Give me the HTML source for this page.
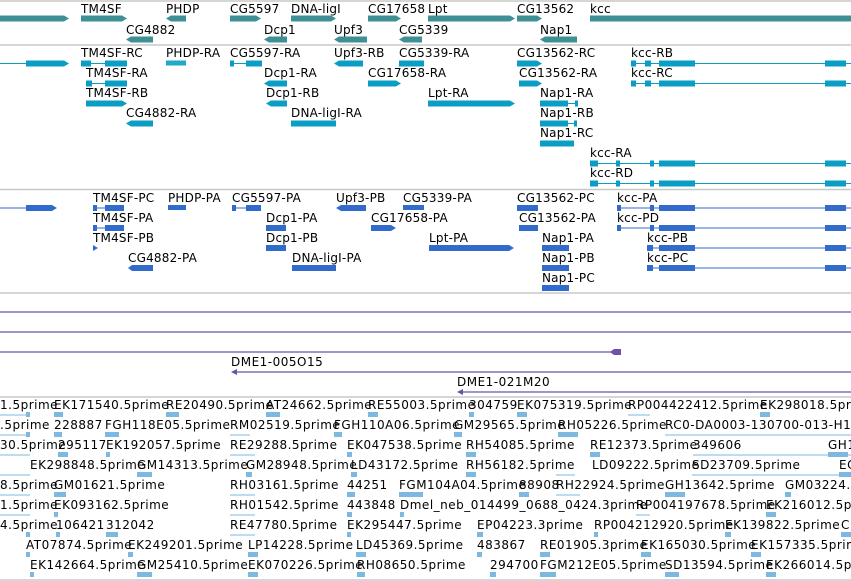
<!DOCTYPE html>
<html><head><meta charset="utf-8"><style>
html,body{margin:0;padding:0;background:#fff;width:851px;height:581px;overflow:hidden}
svg{display:block}
text{font-family:"DejaVu Sans","Liberation Sans",sans-serif;font-size:12px;fill:#000;letter-spacing:0.2px}
.p text{letter-spacing:0.5px}
</style></head><body>
<svg width="851" height="581" viewBox="0 0 851 581" xmlns="http://www.w3.org/2000/svg">
<g stroke="#c8c8c8" stroke-width="1.5">
<line x1="0" y1="1" x2="851" y2="1"/><line x1="0" y1="45" x2="851" y2="45"/>
<line x1="0" y1="189.5" x2="851" y2="189.5"/><line x1="0" y1="293" x2="851" y2="293"/>
<line x1="0" y1="397" x2="851" y2="397"/><line x1="0" y1="580" x2="851" y2="580"/>
</g>
<!-- Track 1 -->
<g fill="#3f9094">
<path d="M0 15.5H64L69 18.5L64 21.5H0Z"/>
<path d="M81 15.5H122L127 18.5L122 21.5H81Z"/>
<path d="M171 15.5H186V21.5H171L166 18.5Z"/>
<path d="M230 15.5H256L261 18.5L256 21.5H230Z"/>
<path d="M291 15.5H331L336 18.5L331 21.5H291Z"/>
<path d="M368 15.5H396L401 18.5L396 21.5H368Z"/>
<path d="M428 15.5H510L515 18.5L510 21.5H428Z"/>
<path d="M517 15.5H537L542 18.5L537 21.5H517Z"/>
<rect x="590" y="15.5" width="261" height="6"/>
<path d="M131 36.5H153V42.5H131L126 39.5Z"/>
<path d="M269 36.5H287V42.5H269L264 39.5Z"/>
<path d="M339 36.5H367V42.5H339L334 39.5Z"/>
<path d="M404 36.5H422V42.5H404L399 39.5Z"/>
<path d="M545 36.5H577V42.5H545L540 39.5Z"/>
</g>
<g>
<text x="81" y="13">TM4SF</text><text x="166" y="13">PHDP</text><text x="230" y="13">CG5597</text>
<text x="291" y="13">DNA-ligI</text><text x="368" y="13">CG17658</text><text x="428" y="13">Lpt</text>
<text x="517" y="13">CG13562</text><text x="590" y="13">kcc</text>
<text x="126" y="34">CG4882</text><text x="264" y="34">Dcp1</text><text x="334" y="34">Upf3</text>
<text x="399" y="34">CG5339</text><text x="540" y="34">Nap1</text>
</g>
<!-- Track 2 cyan -->
<g fill="#0a9ec4" stroke="#0a9ec4">
<g stroke-width="1" fill="none">
<line x1="0" y1="63.5" x2="26" y2="63.5"/>
<line x1="81" y1="63.5" x2="127" y2="63.5"/><line x1="86" y1="83.5" x2="127" y2="83.5"/>
<line x1="230" y1="63.5" x2="262" y2="63.5"/>
<line x1="631" y1="63.5" x2="851" y2="63.5"/><line x1="631" y1="83.5" x2="851" y2="83.5"/>
<line x1="590" y1="163.5" x2="851" y2="163.5"/><line x1="590" y1="183.5" x2="851" y2="183.5"/>
<line x1="540" y1="103.5" x2="578" y2="103.5"/><line x1="540" y1="123.5" x2="577" y2="123.5"/>
</g>
<g stroke="none">
<path d="M26 60.5H64L69 63.5L64 66.5H26Z"/>
<rect x="81" y="60.5" width="10" height="6"/><rect x="105" y="60.5" width="22" height="6"/>
<rect x="86" y="80.5" width="6" height="6"/><rect x="105" y="80.5" width="22" height="6"/>
<path d="M86 100.5H122L127 103.5L122 106.5H86Z"/>
<rect x="166" y="60.5" width="20" height="5" opacity=".9"/>
<rect x="230" y="60.5" width="4" height="6"/><rect x="246" y="60.5" width="16" height="6"/>
<path d="M339 60.5H363V66.5H339L334 63.5Z"/>
<rect x="399" y="60.5" width="25" height="6"/>
<path d="M517 60.5H537L542 63.5L537 66.5H517Z"/>
<path d="M519 80.5H537L542 83.5L537 86.5H519Z"/>
<path d="M269 80.5H287V86.5H269L264 83.5Z"/>
<path d="M271 100.5H287V106.5H271L266 103.5Z"/>
<path d="M368 80.5H396L401 83.5L396 86.5H368Z"/>
<path d="M428 100.5H510L515 103.5L510 106.5H428Z"/>
<path d="M131 120.5H153V126.5H131L126 123.5Z"/>
<rect x="291" y="120.5" width="45" height="6"/>
<rect x="540" y="100.5" width="28" height="6"/><rect x="575" y="100.5" width="3" height="6"/>
<rect x="540" y="120.5" width="28" height="6"/><rect x="574" y="120.5" width="3" height="6"/>
<rect x="540" y="140.5" width="34" height="6"/>
<rect x="631" y="60.5" width="5" height="6"/><rect x="645" y="60.5" width="6" height="6"/><rect x="659" y="60.5" width="36" height="6"/><rect x="825" y="60.5" width="21" height="6"/>
<rect x="631" y="80.5" width="5" height="6"/><rect x="645" y="80.5" width="6" height="6"/><rect x="659" y="80.5" width="36" height="6"/><rect x="825" y="80.5" width="21" height="6"/>
<rect x="590" y="160.5" width="8" height="6"/><rect x="616" y="160.5" width="4" height="6"/><rect x="650" y="160.5" width="4" height="6"/><rect x="659" y="160.5" width="36" height="6"/><rect x="825" y="160.5" width="21" height="6"/>
<rect x="590" y="180.5" width="8" height="6"/><rect x="616" y="180.5" width="4" height="6"/><rect x="650" y="180.5" width="4" height="6"/><rect x="659" y="180.5" width="36" height="6"/><rect x="825" y="180.5" width="21" height="6"/>
</g></g>
<g>
<text x="81" y="57">TM4SF-RC</text><text x="166" y="57">PHDP-RA</text><text x="230" y="57">CG5597-RA</text>
<text x="334" y="57">Upf3-RB</text><text x="399" y="57">CG5339-RA</text><text x="517" y="57">CG13562-RC</text><text x="631" y="57">kcc-RB</text>
<text x="86" y="77">TM4SF-RA</text><text x="264" y="77">Dcp1-RA</text><text x="368" y="77">CG17658-RA</text>
<text x="519" y="77">CG13562-RA</text><text x="631" y="77">kcc-RC</text>
<text x="86" y="97">TM4SF-RB</text><text x="266" y="97">Dcp1-RB</text><text x="428" y="97">Lpt-RA</text><text x="540" y="97">Nap1-RA</text>
<text x="126" y="117">CG4882-RA</text><text x="291" y="117">DNA-ligI-RA</text><text x="540" y="117">Nap1-RB</text>
<text x="540" y="137">Nap1-RC</text><text x="590" y="157">kcc-RA</text><text x="590" y="177">kcc-RD</text>
</g>
<!-- Track 3 blue -->
<g fill="#316bcc" stroke="#316bcc">
<g stroke-width="1" fill="none">
<line x1="0" y1="208" x2="26" y2="208"/>
<line x1="93" y1="208" x2="124" y2="208"/><line x1="93" y1="228" x2="124" y2="228"/>
<line x1="232" y1="208" x2="261" y2="208"/>
<line x1="617" y1="208" x2="851" y2="208"/><line x1="617" y1="228" x2="851" y2="228"/>
<line x1="647" y1="248" x2="851" y2="248"/><line x1="647" y1="268" x2="851" y2="268"/>
</g>
<g stroke="none">
<path d="M26 205H52L57 208L52 211H26Z"/>
<rect x="93" y="205" width="4" height="6"/><rect x="105" y="205" width="19" height="6"/>
<rect x="93" y="225" width="4" height="6"/><rect x="105" y="225" width="19" height="6"/>
<path d="M93 245L98 248L93 251Z"/>
<rect x="168" y="205" width="18" height="5"/>
<rect x="232" y="205" width="4" height="6"/><rect x="246" y="205" width="15" height="6"/>
<path d="M341 205H366V211H341L336 208Z"/>
<rect x="403" y="205" width="21" height="5"/>
<rect x="517" y="205" width="21" height="6"/><rect x="519" y="225" width="19" height="6"/>
<rect x="266" y="225" width="20" height="6"/><rect x="266" y="245" width="20" height="6"/>
<path d="M371 225H391L396 228L391 231H371Z"/>
<path d="M429 245H509L514 248L509 251H429Z"/>
<path d="M132 265H153V271H132L128 268Z"/>
<rect x="292" y="265" width="44" height="6"/>
<rect x="542" y="245" width="27" height="6"/><rect x="542" y="265" width="27" height="6"/><rect x="542" y="285" width="27" height="6"/>
<rect x="617" y="205" width="4" height="6"/><rect x="650" y="205" width="4" height="6"/><rect x="659" y="205" width="36" height="6"/><rect x="825" y="205" width="21" height="6"/>
<rect x="617" y="225" width="4" height="6"/><rect x="650" y="225" width="4" height="6"/><rect x="659" y="225" width="36" height="6"/><rect x="825" y="225" width="21" height="6"/>
<rect x="647" y="245" width="6" height="6"/><rect x="659" y="245" width="36" height="6"/><rect x="825" y="245" width="21" height="6"/>
<rect x="647" y="265" width="6" height="6"/><rect x="659" y="265" width="36" height="6"/><rect x="825" y="265" width="21" height="6"/>
</g></g>
<g>
<text x="93" y="202">TM4SF-PC</text><text x="168" y="202">PHDP-PA</text><text x="232" y="202">CG5597-PA</text>
<text x="336" y="202">Upf3-PB</text><text x="403" y="202">CG5339-PA</text><text x="517" y="202">CG13562-PC</text><text x="617" y="202">kcc-PA</text>
<text x="93" y="222">TM4SF-PA</text><text x="266" y="222">Dcp1-PA</text><text x="371" y="222">CG17658-PA</text>
<text x="519" y="222">CG13562-PA</text><text x="617" y="222">kcc-PD</text>
<text x="93" y="242">TM4SF-PB</text><text x="266" y="242">Dcp1-PB</text><text x="429" y="242">Lpt-PA</text>
<text x="542" y="242">Nap1-PA</text><text x="647" y="242">kcc-PB</text>
<text x="128" y="262">CG4882-PA</text><text x="292" y="262">DNA-ligI-PA</text><text x="542" y="262">Nap1-PB</text><text x="647" y="262">kcc-PC</text>
<text x="542" y="282">Nap1-PC</text>
</g>
<!-- Purple -->
<g stroke="#6b52a3" stroke-width="1.2" fill="#6b52a3">
<line x1="0" y1="312" x2="851" y2="312"/><line x1="0" y1="332" x2="851" y2="332"/>
<line x1="0" y1="352" x2="614" y2="352"/><path d="M614 349H621V355H614L610 352Z" stroke="none"/>
<line x1="235" y1="372" x2="851" y2="372"/><path d="M231 372L237 369V375Z" stroke="none"/>
<line x1="461" y1="392" x2="851" y2="392"/><path d="M457 392L463 389V395Z" stroke="none"/>
</g>
<g class="p"><text x="231" y="366">DME1-005O15</text><text x="457" y="386">DME1-021M20</text></g>
<!-- Prime track -->
<g fill="#7db8e0" stroke="#7db8e0" stroke-width="1">
<line x1="0" y1="415" x2="30" y2="415"/><line x1="0" y1="435" x2="30" y2="435"/><line x1="0" y1="455" x2="30" y2="455"/>
<line x1="0" y1="475" x2="30" y2="475"/><line x1="0" y1="495" x2="30" y2="495"/><line x1="0" y1="515" x2="30" y2="515"/>
<line x1="230" y1="435" x2="250" y2="435"/><line x1="230" y1="455" x2="255" y2="455"/><line x1="230" y1="495" x2="255" y2="495"/>
<line x1="230" y1="515" x2="255" y2="515"/><line x1="230" y1="535" x2="255" y2="535"/>
<line x1="628" y1="415" x2="650" y2="415"/><line x1="665" y1="435" x2="851" y2="435"/>
<line x1="693" y1="455" x2="851" y2="455"/><line x1="692" y1="475" x2="851" y2="475"/>
<line x1="636" y1="515" x2="650" y2="515"/><line x1="556" y1="495" x2="580" y2="495"/><line x1="556" y1="475" x2="575" y2="475"/>
<g stroke="none">
<rect x="54" y="412" width="9" height="5"/><rect x="166" y="412" width="13" height="5"/><rect x="266" y="412" width="14" height="5"/>
<rect x="368" y="412" width="10" height="5"/><rect x="469" y="412" width="5" height="5"/><rect x="517" y="412" width="10" height="5"/>
<rect x="760" y="412" width="10" height="5"/><rect x="26" y="412" width="4" height="5"/>
<rect x="54" y="432" width="8" height="5"/><rect x="105" y="432" width="14" height="5"/><rect x="334" y="432" width="8" height="5"/>
<rect x="454" y="432" width="8" height="5"/><rect x="558" y="432" width="20" height="5"/><rect x="26" y="432" width="4" height="5"/>
<rect x="58" y="452" width="10" height="5"/><rect x="106" y="452" width="4" height="5"/><rect x="347" y="452" width="5" height="5"/>
<rect x="466" y="452" width="10" height="5"/><rect x="590" y="452" width="10" height="5"/><rect x="828" y="452" width="20" height="5"/>
<rect x="137" y="472" width="15" height="5"/><rect x="246" y="472" width="6" height="5"/><rect x="351" y="472" width="6" height="5"/>
<rect x="466" y="472" width="10" height="5"/><rect x="839" y="472" width="12" height="5"/>
<rect x="54" y="492" width="12" height="5"/><rect x="347" y="492" width="8" height="5"/><rect x="399" y="492" width="24" height="5"/>
<rect x="519" y="492" width="10" height="5"/><rect x="665" y="492" width="20" height="5"/><rect x="785" y="492" width="6" height="5"/>
<rect x="54" y="512" width="4" height="5"/><rect x="347" y="512" width="5" height="5"/><rect x="400" y="512" width="4" height="5"/>
<rect x="766" y="512" width="10" height="5"/>
<rect x="56" y="532" width="4" height="5"/><rect x="106" y="532" width="12" height="5"/><rect x="347" y="532" width="4" height="5"/>
<rect x="477" y="532" width="6" height="5"/><rect x="594" y="532" width="4" height="5"/><rect x="725" y="532" width="6" height="5"/><rect x="841" y="532" width="10" height="5"/><rect x="26" y="532" width="4" height="5"/>
<rect x="26" y="552" width="4" height="5"/><rect x="128" y="552" width="5" height="5"/><rect x="248" y="552" width="10" height="5"/>
<rect x="356" y="552" width="10" height="5"/><rect x="477" y="552" width="5" height="5"/><rect x="540" y="552" width="10" height="5"/>
<rect x="641" y="552" width="10" height="5"/><rect x="751" y="552" width="10" height="5"/>
<rect x="30" y="572" width="4" height="5"/><rect x="137" y="572" width="15" height="5"/><rect x="248" y="572" width="10" height="5"/>
<rect x="357" y="572" width="8" height="5"/><rect x="490" y="572" width="6" height="5"/><rect x="540" y="572" width="16" height="5"/>
<rect x="665" y="572" width="14" height="5"/><rect x="766" y="572" width="10" height="5"/>
</g></g>
<g class="p">
<text x="0" y="409">1.5prime</text><text x="54" y="409">EK171540.5prime</text><text x="166" y="409">RE20490.5prime</text>
<text x="266" y="409">AT24662.5prime</text><text x="368" y="409">RE55003.5prime</text><text x="469" y="409">304759</text>
<text x="517" y="409">EK075319.5prime</text><text x="628" y="409">RP004422412.5prime</text><text x="760" y="409">EK298018.5prime</text>
<text x="0" y="429">.5prime</text><text x="54" y="429">228887</text><text x="105" y="429">FGH118E05.5prime</text>
<text x="230" y="429">RM02519.5prime</text><text x="334" y="429">FGH110A06.5prime</text><text x="454" y="429">GM29565.5prime</text>
<text x="558" y="429">RH05226.5prime</text><text x="665" y="429">RC0-DA0003-130700-013-H1</text>
<text x="0" y="449">30.5prime</text><text x="58" y="449">295117</text><text x="106" y="449">EK192057.5prime</text>
<text x="230" y="449">RE29288.5prime</text><text x="347" y="449">EK047538.5prime</text><text x="466" y="449">RH54085.5prime</text>
<text x="590" y="449">RE12373.5prime</text><text x="693" y="449">349606</text><text x="828" y="449">GH1</text>
<text x="30" y="469">EK298848.5prime</text><text x="137" y="469">GM14313.5prime</text><text x="246" y="469">GM28948.5prime</text>
<text x="351" y="469">LD43172.5prime</text><text x="466" y="469">RH56182.5prime</text><text x="592" y="469">LD09222.5prime</text>
<text x="692" y="469">SD23709.5prime</text><text x="839" y="469">EC</text>
<text x="0" y="489">8.5prime</text><text x="54" y="489">GM01621.5prime</text><text x="230" y="489">RH03161.5prime</text>
<text x="347" y="489">44251</text><text x="399" y="489">FGM104A04.5prime</text><text x="519" y="489">88908</text>
<text x="556" y="489">RH22924.5prime</text><text x="665" y="489">GH13642.5prime</text><text x="785" y="489">GM03224.5</text>
<text x="0" y="509">1.5prime</text><text x="54" y="509">EK093162.5prime</text><text x="230" y="509">RH01542.5prime</text>
<text x="347" y="509">443848</text><text x="400" y="509">Dmel_neb_014499_0688_0424.3prime</text>
<text x="636" y="509">RP004197678.5prime</text><text x="766" y="509">EK216012.5prime</text>
<text x="0" y="529">4.5prime</text><text x="56" y="529">106421</text><text x="106" y="529">312042</text>
<text x="230" y="529">RE47780.5prime</text><text x="347" y="529">EK295447.5prime</text><text x="477" y="529">EP04223.3prime</text>
<text x="594" y="529">RP004212920.5prime</text><text x="725" y="529">EK139822.5prime</text><text x="841" y="529">C</text>
<text x="26" y="549">AT07874.5prime</text><text x="128" y="549">EK249201.5prime</text><text x="248" y="549">LP14228.5prime</text>
<text x="356" y="549">LD45369.5prime</text><text x="477" y="549">483867</text><text x="540" y="549">RE01905.3prime</text>
<text x="641" y="549">EK165030.5prime</text><text x="751" y="549">EK157335.5prime</text>
<text x="30" y="569">EK142664.5prime</text><text x="137" y="569">GM25410.5prime</text><text x="248" y="569">EK070226.5prime</text>
<text x="357" y="569">RH08650.5prime</text><text x="490" y="569">294700</text><text x="540" y="569">FGM212E05.5prime</text>
<text x="665" y="569">SD13594.5prime</text><text x="766" y="569">EK266014.5prime</text>
</g>
</svg>
</body></html>
